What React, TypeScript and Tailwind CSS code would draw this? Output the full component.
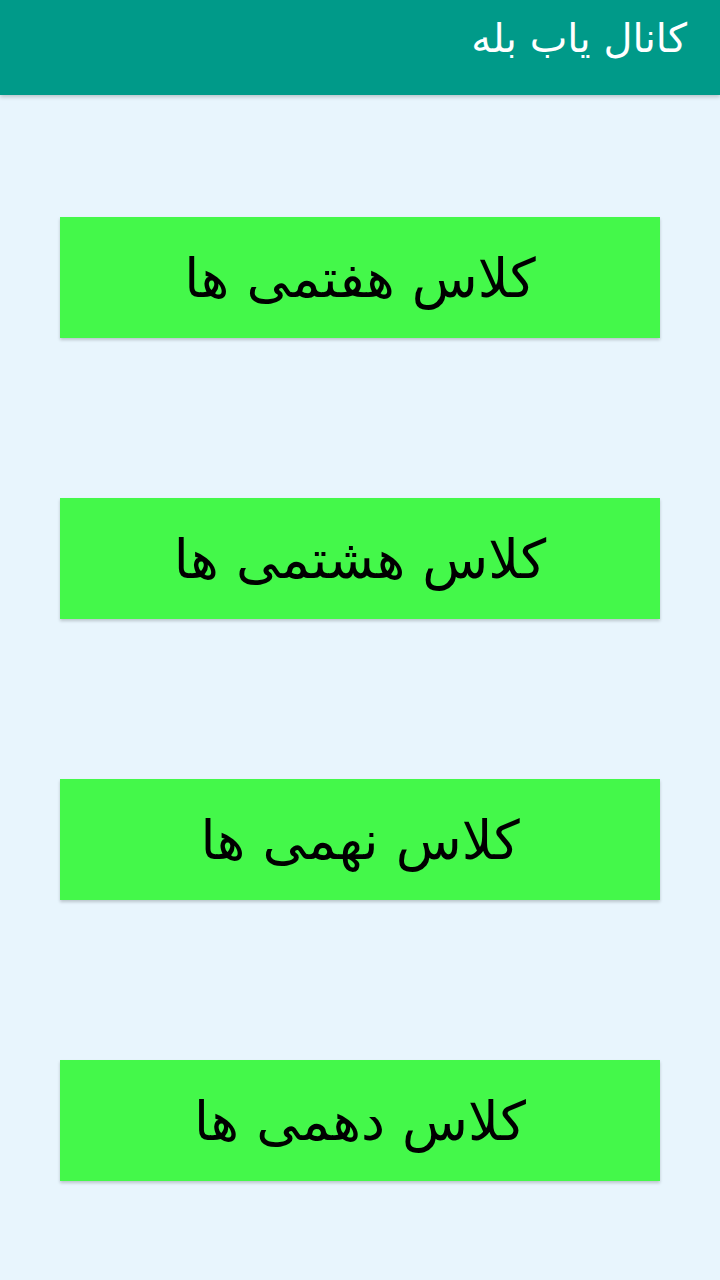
import React from 'react';

const classes = ['کلاس هفتمی ها', 'کلاس هشتمی ها', 'کلاس نهمی ها', 'کلاس دهمی ها'];

export default function App() {
  return (
    <div dir="rtl" className="min-h-[1280px] bg-[#e8f5fd] font-['DejaVu_Sans',sans-serif]">
      {/* App bar */}
      <header className="h-[95px] bg-[#009a89] shadow-[0_2px_4px_rgba(0,0,0,0.2)] flex items-center px-[33px]">
        <h1 className="text-white text-[40px] leading-none pb-[20px]">کانال یاب بله</h1>
      </header>

      {/* Class buttons */}
      <main className="flex flex-col gap-[160px] px-[60px] pt-[122px]">
        {classes.map((label) => (
          <button
            key={label}
            className="h-[121px] w-full bg-[#44f84a] text-black text-[54px] shadow-[0_2px_3px_rgba(0,0,0,0.2)] flex items-center justify-center pt-[2px]"
          >
            {label}
          </button>
        ))}
      </main>
    </div>
  );
}
